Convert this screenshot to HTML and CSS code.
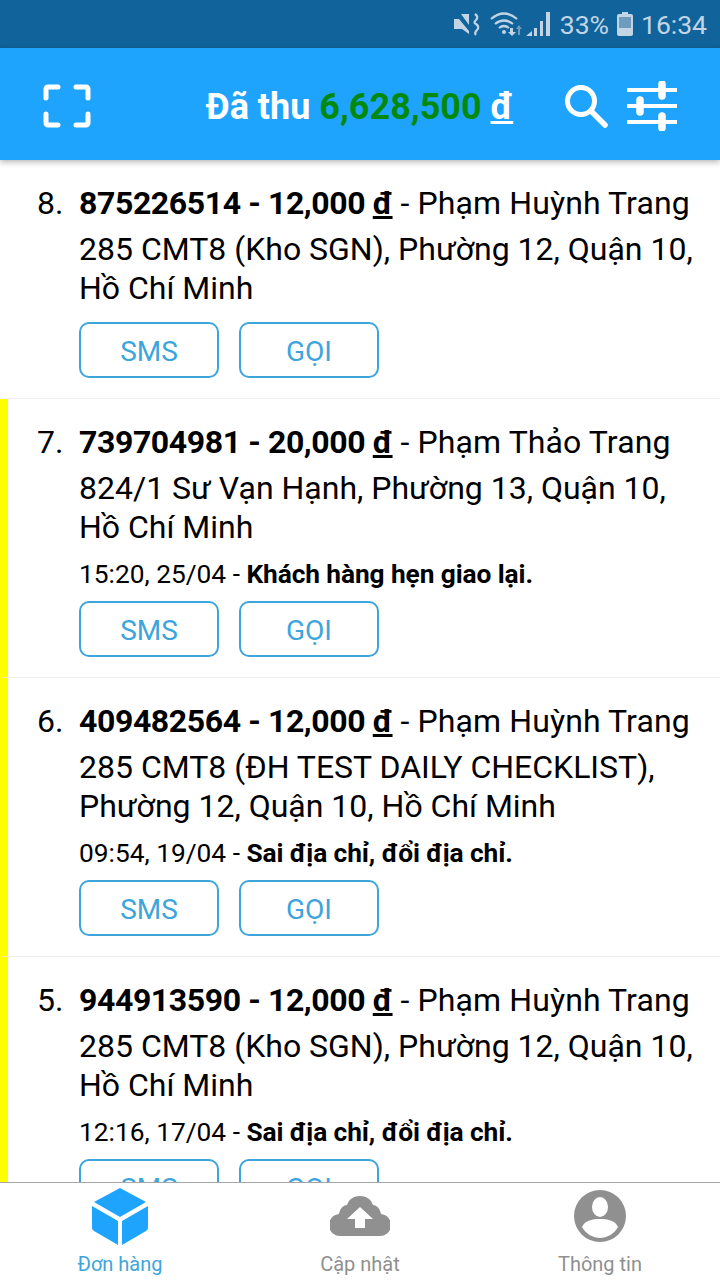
FILE: index.html
```html
<!DOCTYPE html>
<html lang="en">

<head>
  <meta charset="UTF-8">
  <meta name="viewport" content="width=device-width, initial-scale=1.0">
  <title>Đơn hàng</title>
  <link rel="stylesheet" href="styles.css">
</head>

<body>
  <div class="app">
    <div class="status-bar">
      <svg class="st-mute" width="26" height="24" viewBox="0 0 26 24">
        <path d="M0 7h5l10 12v3l-7-5H0z M7 2h8v11z" fill="#c3d5e4" />
        <path d="M21 2q4 3 1 6t0 4q4 3 1 6t-1 5" fill="none" stroke="#c3d5e4" stroke-width="2.2" />
      </svg>
      <svg class="st-wifi" width="34" height="24" viewBox="0 0 34 24">
        <path d="M1 7q13-11 26 0M5 12q9-7 18 0M9 16q5-4 10 0" fill="none" stroke="#c3d5e4" stroke-width="2.2" />
        <circle cx="14" cy="20" r="2" fill="#c3d5e4" />
        <path d="M20 16h3v4h3l-4 4-4-4h2z" fill="#c3d5e4" />
        <path d="M28 23v-6h-2l3-4 3 4h-2v6z" fill="#6f9cbd" />
      </svg>
      <svg class="st-signal" width="24" height="24" viewBox="0 0 24 24">
        <path d="M0 24l6-5v5z M8 24v-8h3v8z M14 24v-15h3v15z M20 24v-24h4v24z" fill="#c3d5e4" />
      </svg>
      <span class="st-text">33%</span>
      <svg class="st-batt" width="16" height="24" viewBox="0 0 16 24">
        <path d="M5 0h6v2h3a2 2 0 0 1 2 2v18a2 2 0 0 1-2 2H2a2 2 0 0 1-2-2V4a2 2 0 0 1 2-2h3z" fill="#c3d5e4" />
        <rect x="2" y="5" width="12" height="11" fill="#6f9cbd" />
      </svg>
      <span class="st-text">16:34</span>
    </div>

    <div class="header">
      <svg class="scan-icon" width="48" height="44" viewBox="0 0 48 44">
        <path d="M15 3H5a2 2 0 0 0-2 2v9M33 3h10a2 2 0 0 1 2 2v9M3 30v9a2 2 0 0 0 2 2h10M45 30v9a2 2 0 0 1-2 2H33" fill="none" stroke="#fff" stroke-width="5" stroke-linecap="round" />
      </svg>
      <div class="total">Đã thu <span class="total-num">6,628,500</span> <u>đ</u></div>
      <svg class="search-icon" width="44" height="44" viewBox="0 0 44 44">
        <circle cx="17" cy="17" r="13.5" fill="none" stroke="#fff" stroke-width="5" />
        <path d="M27 27l14 14" stroke="#fff" stroke-width="5.5" stroke-linecap="round" />
      </svg>
      <svg class="filter-icon" width="50" height="50" viewBox="0 0 50 50">
        <path d="M0 9h50M0 25h50M0 41h50" stroke="#fff" stroke-width="4" />
        <path d="M35 3v12M13 19v12M35 35v12" stroke="#fff" stroke-width="7.5" stroke-linecap="round" />
      </svg>
    </div>

    <div class="list">
      <div class="order">
        <div class="order-num">8.</div>
        <div class="order-body">
          <div class="order-title"><b>875226514 - 12,000 <u>đ</u></b> - Phạm Huỳnh Trang</div>
          <div class="order-addr">285 CMT8 (Kho SGN), Phường 12, Quận 10, Hồ Chí Minh</div>
          <div class="order-btns"><a class="btn">SMS</a><a class="btn">GỌI</a></div>
        </div>
      </div>

      <div class="order late">
        <div class="order-num">7.</div>
        <div class="order-body">
          <div class="order-title"><b>739704981 - 20,000 <u>đ</u></b> - Phạm Thảo Trang</div>
          <div class="order-addr">824/1 Sư Vạn Hạnh, Phường 13, Quận 10, Hồ Chí Minh</div>
          <div class="order-note">15:20, 25/04 - <b>Khách hàng hẹn giao lại.</b></div>
          <div class="order-btns"><a class="btn">SMS</a><a class="btn">GỌI</a></div>
        </div>
      </div>

      <div class="order late">
        <div class="order-num">6.</div>
        <div class="order-body">
          <div class="order-title"><b>409482564 - 12,000 <u>đ</u></b> - Phạm Huỳnh Trang</div>
          <div class="order-addr">285 CMT8 (ĐH TEST DAILY CHECKLIST), Phường 12, Quận 10, Hồ Chí Minh</div>
          <div class="order-note">09:54, 19/04 - <b>Sai địa chỉ, đổi địa chỉ.</b></div>
          <div class="order-btns"><a class="btn">SMS</a><a class="btn">GỌI</a></div>
        </div>
      </div>

      <div class="order late">
        <div class="order-num">5.</div>
        <div class="order-body">
          <div class="order-title"><b>944913590 - 12,000 <u>đ</u></b> - Phạm Huỳnh Trang</div>
          <div class="order-addr">285 CMT8 (Kho SGN), Phường 12, Quận 10, Hồ Chí Minh</div>
          <div class="order-note">12:16, 17/04 - <b>Sai địa chỉ, đổi địa chỉ.</b></div>
          <div class="order-btns"><a class="btn">SMS</a><a class="btn">GỌI</a></div>
        </div>
      </div>
    </div>

    <div class="tabs">
      <div class="tab active">
        <svg width="60" height="60" viewBox="0 0 60 60">
          <path d="M30 2l26 14-26 15L4 16z" fill="#1fa4fd" />
          <path d="M2 20l26 15v24L4 45a4 4 0 0 1-2-3z" fill="#1fa4fd" />
          <path d="M58 20L32 35v24l24-14a4 4 0 0 0 2-3z" fill="#1fa4fd" />
        </svg>
        <span>Đơn hàng</span>
      </div>
      <div class="tab">
        <svg width="60" height="60" viewBox="0 0 60 60">
          <path d="M11 50a11 11 0 0 1-2-22C10 22 14 19 17 19 19 13 24 10 30 10S41 13 43 19C46 19 50 22 51 28a11 11 0 0 1-2 22z" fill="#909090" />
          <path d="M30 21l13 12h-8v9H25v-9h-8z" fill="#fff" />
        </svg>
        <span>Cập nhật</span>
      </div>
      <div class="tab">
        <svg width="60" height="60" viewBox="0 0 60 60">
          <circle cx="30" cy="30" r="26" fill="#909090" />
          <ellipse cx="30" cy="21" rx="8" ry="10" fill="#fff" />
          <path d="M12 41c3-7 11-8 18-8s15 1 18 8c-4 7-11 11-18 11s-14-4-18-11z" fill="#fff" />
        </svg>
        <span>Thông tin</span>
      </div>
    </div>
  </div>
</body>

</html>
```

FILE: styles.css
```css
body {
  font-family: Roboto, "Noto Sans", sans-serif;
  background-color: #ffffff;
  color: #000000;
  margin: 0;
  padding: 0;
}

.app {
  display: flex;
  flex-direction: column;
  height: 1280px;
  overflow: hidden;
}

.status-bar {
  flex: none;
  height: 48px;
  background-color: #10649b;
  display: flex;
  align-items: center;
  justify-content: flex-end;
  padding-right: 13px;
  color: #c3d5e4;
}

.status-bar svg {
  flex: none;
}

.st-mute {
  margin-right: 10px;
}

.st-wifi {
  margin-right: 2px;
}

.st-signal {
  margin-right: 10px;
}

.st-batt {
  margin: 0 8px 0 8px;
}

.st-text {
  font-size: 26.5px;
}

.header {
  flex: none;
  height: 112px;
  box-sizing: border-box;
  padding: 4px 43px 0;
  background-color: #1fa4fd;
  display: flex;
  align-items: center;
  box-shadow: 0 2px 6px rgba(0, 0, 0, 0.3);
  position: relative;
  color: #ffffff;
}

.total {
  flex: 1;
  text-align: center;
  font-size: 36px;
  font-weight: bold;
  padding: 2px 0 0 64px;
  white-space: nowrap;
}

.total-num {
  color: #038a0e;
}

.search-icon {
  margin-right: 19px;
}

.list {
  flex: 1;
  overflow: hidden;
}

.order {
  display: flex;
  border-left: 8px solid transparent;
  border-bottom: 1px solid #eeeeee;
  padding: 24px 14px 20px 29px;
}

.order.late {
  border-left-color: #ffff00;
}

.order-num {
  flex: none;
  width: 42px;
  font-size: 32px;
  line-height: 38px;
}

.order-body {
  flex: 1;
  min-width: 0;
}

.order-title {
  font-size: 32px;
  line-height: 38px;
  margin-bottom: 8px;
  letter-spacing: 0.1px;
  white-space: nowrap;
}

.order-title b {
  letter-spacing: -0.4px;
}

.order-addr {
  font-size: 32px;
  line-height: 39px;
}

.order-note {
  font-size: 26.3px;
  line-height: 26px;
  margin-top: 14px;
}

.order-note b {
  letter-spacing: -0.1px;
}

.order-btns {
  display: flex;
  gap: 20px;
  margin-top: 14px;
}

.btn {
  width: 140px;
  height: 56px;
  box-sizing: border-box;
  padding-top: 2px;
  border: 2px solid #3da5dc;
  border-radius: 10px;
  display: flex;
  align-items: center;
  justify-content: center;
  font-size: 28px;
  color: #3da5dc;
}

.tabs {
  flex: none;
  height: 97px;
  border-top: 1px solid #a6a6a6;
  background-color: #ffffff;
  display: flex;
  position: relative;
}

.tab {
  flex: 1;
  display: flex;
  flex-direction: column;
  align-items: center;
  padding-top: 3px;
  font-size: 20px;
  color: #8f8f8f;
}

.tab.active {
  color: #3da5dc;
}

.tab svg {
  margin-bottom: 6px;
}
```
